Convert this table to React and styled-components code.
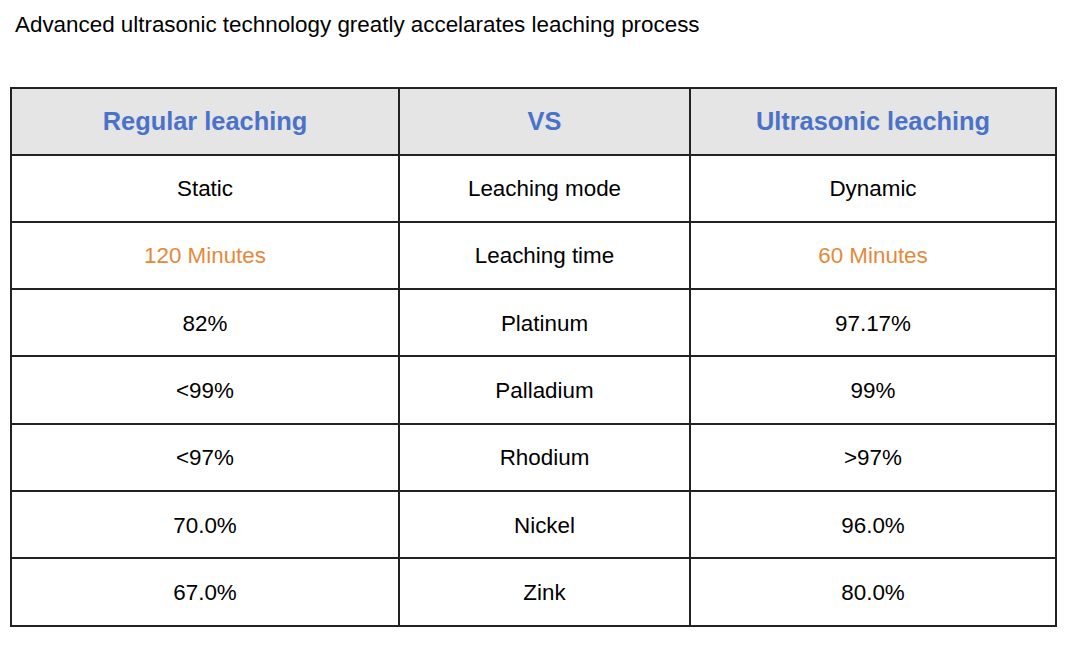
import React from "react";
import styled, { createGlobalStyle } from "styled-components";

const Global = createGlobalStyle`
  html, body { margin: 0; padding: 0; background: #fff; }
  body { font-family: "Liberation Sans", Arial, sans-serif; color: #000; }
`;

const Page = styled.div`
  width: 1076px;
  height: 648px;
  padding: 12px 0 0 10px;
  box-sizing: border-box;
`;

const Title = styled.h1`
  margin: 0 0 0 5px;
  font-size: 22.4px;
  font-weight: 400;
  line-height: 26px;
  color: #000;
`;

const Table = styled.table`
  margin-top: 49px;
  width: 1045px;
  border-collapse: collapse;
  table-layout: fixed;
`;

const HeadCell = styled.th`
  height: 63.5px;
  padding: 1px 0 0;
  border: 2px solid #222;
  background: #e5e5e5;
  color: #4a72c8;
  font-size: 25.4px;
  font-weight: 700;
  text-align: center;
  vertical-align: middle;
`;

const Cell = styled.td`
  height: 63.3px;
  padding: 2px 0 0;
  border: 2px solid #222;
  font-size: 22.4px;
  text-align: center;
  vertical-align: middle;
  color: ${(p) => (p.$accent ? "#e6883a" : "#000")};
`;

const rows = [
  ["Static", "Leaching mode", "Dynamic"],
  ["120 Minutes", "Leaching time", "60 Minutes", true],
  ["82%", "Platinum", "97.17%"],
  ["<99%", "Palladium", "99%"],
  ["<97%", "Rhodium", ">97%"],
  ["70.0%", "Nickel", "96.0%"],
  ["67.0%", "Zink", "80.0%"],
];

export default function App() {
  return (
    <Page>
      <Global />
      <Title>Advanced ultrasonic technology greatly accelarates leaching process</Title>
      <Table>
        <colgroup>
          <col style={{ width: 388 }} />
          <col style={{ width: 291 }} />
          <col style={{ width: 366 }} />
        </colgroup>
        <thead>
          <tr>
            <HeadCell>Regular leaching</HeadCell>
            <HeadCell>VS</HeadCell>
            <HeadCell>Ultrasonic leaching</HeadCell>
          </tr>
        </thead>
        <tbody>
          {rows.map(([a, b, c, accent]) => (
            <tr key={b}>
              <Cell $accent={accent}>{a}</Cell>
              <Cell>{b}</Cell>
              <Cell $accent={accent}>{c}</Cell>
            </tr>
          ))}
        </tbody>
      </Table>
    </Page>
  );
}
